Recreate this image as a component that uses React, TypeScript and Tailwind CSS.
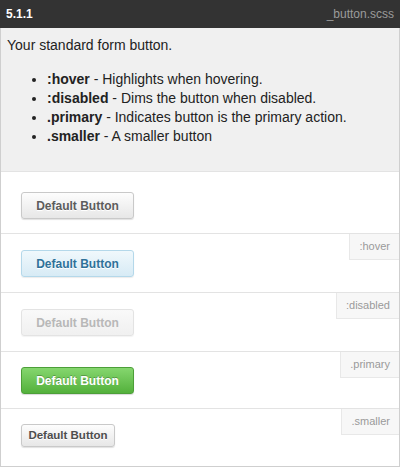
import React from "react";

const btnBase =
  "flex items-center justify-center rounded-[3px] border font-bold leading-none";

function Row({
  label,
  pad,
  children,
}: {
  label?: string;
  pad: string;
  children: React.ReactNode;
}) {
  return (
    <div className={"relative border-t border-[#e3e3e3] px-[20px] " + pad}>
      {label && (
        <div className="absolute right-0 top-0 h-[26px] flex items-center px-[9px] bg-[#f7f7f7] border-l border-b border-[#e8e8e8] text-[11px] text-[#9a9a9a]">
          {label}
        </div>
      )}
      {children}
    </div>
  );
}

export default function App() {
  return (
    <div
      className="w-[400px] h-[469px] bg-white"
      style={{ fontFamily: '"Liberation Sans", Arial, sans-serif' }}
    >
      <div className="h-[28px] bg-[#333333] flex items-center justify-between px-[6px]">
        <span className="text-white font-bold text-[12px]">5.1.1</span>
        <span className="text-[#9b9b9b] text-[12px]">_button.scss</span>
      </div>
      <div className="border-x border-b border-[#cfcfcf]">
        <div className="bg-[#f0f0f0] px-[6px] pt-[8px] pb-[25px] text-[14px] leading-[19px] text-[#222]">
          <p className="mb-[15px]">Your standard form button.</p>
          <ul className="list-disc pl-[40px]">
            <li>
              <b>:hover</b> - Highlights when hovering.
            </li>
            <li>
              <b>:disabled</b> - Dims the button when disabled.
            </li>
            <li>
              <b>.primary</b> - Indicates button is the primary action.
            </li>
            <li>
              <b>.smaller</b> - A smaller button
            </li>
          </ul>
        </div>
        <Row pad="pt-[20px] pb-[14px]">
          <div
            className={
              btnBase +
              " text-[12px] w-[113px] h-[27px] border-[#c9c9c9] text-[#5c5c5c] bg-gradient-to-b from-[#fdfdfd] to-[#e7e7e7] shadow-[0_1px_1px_rgba(0,0,0,0.12)] [text-shadow:0_1px_0_#fff]"
            }
          >
            Default Button
          </div>
        </Row>
        <Row label=":hover" pad="pt-[16px] pb-[15px]">
          <div
            className={
              btnBase +
              " text-[12px] w-[113px] h-[27px] border-[#b4d8ea] text-[#2e7199] bg-gradient-to-b from-[#f0f8fc] to-[#d7ebf5] shadow-[0_1px_1px_rgba(0,0,0,0.08)] [text-shadow:0_1px_0_#fff]"
            }
          >
            Default Button
          </div>
        </Row>
        <Row label=":disabled" pad="pt-[16px] pb-[15px]">
          <div
            className={
              btnBase +
              " text-[12px] w-[113px] h-[27px] border-[#e3e3e3] text-[#b8b8b8] bg-gradient-to-b from-[#f9f9f9] to-[#f0f0f0] shadow-[0_1px_1px_rgba(0,0,0,0.05)]"
            }
          >
            Default Button
          </div>
        </Row>
        <Row label=".primary" pad="pt-[15px] pb-[14px]">
          <div
            className={
              btnBase +
              " text-[12px] w-[113px] h-[27px] border-[#4c9f38] text-white bg-gradient-to-b from-[#85d66e] to-[#53b13b] shadow-[0_1px_1px_rgba(0,0,0,0.15)] [text-shadow:0_-1px_0_rgba(0,0,0,0.25)]"
            }
          >
            Default Button
          </div>
        </Row>
        <Row label=".smaller" pad="pt-[15px] pb-[19px]">
          <div
            className={
              btnBase +
              " text-[11.5px] w-[94px] h-[23px] border-[#c9c9c9] text-[#4e4e4e] bg-gradient-to-b from-[#fdfdfd] to-[#e7e7e7] shadow-[0_1px_1px_rgba(0,0,0,0.12)] [text-shadow:0_1px_0_#fff]"
            }
          >
            Default Button
          </div>
        </Row>
      </div>
    </div>
  );
}
